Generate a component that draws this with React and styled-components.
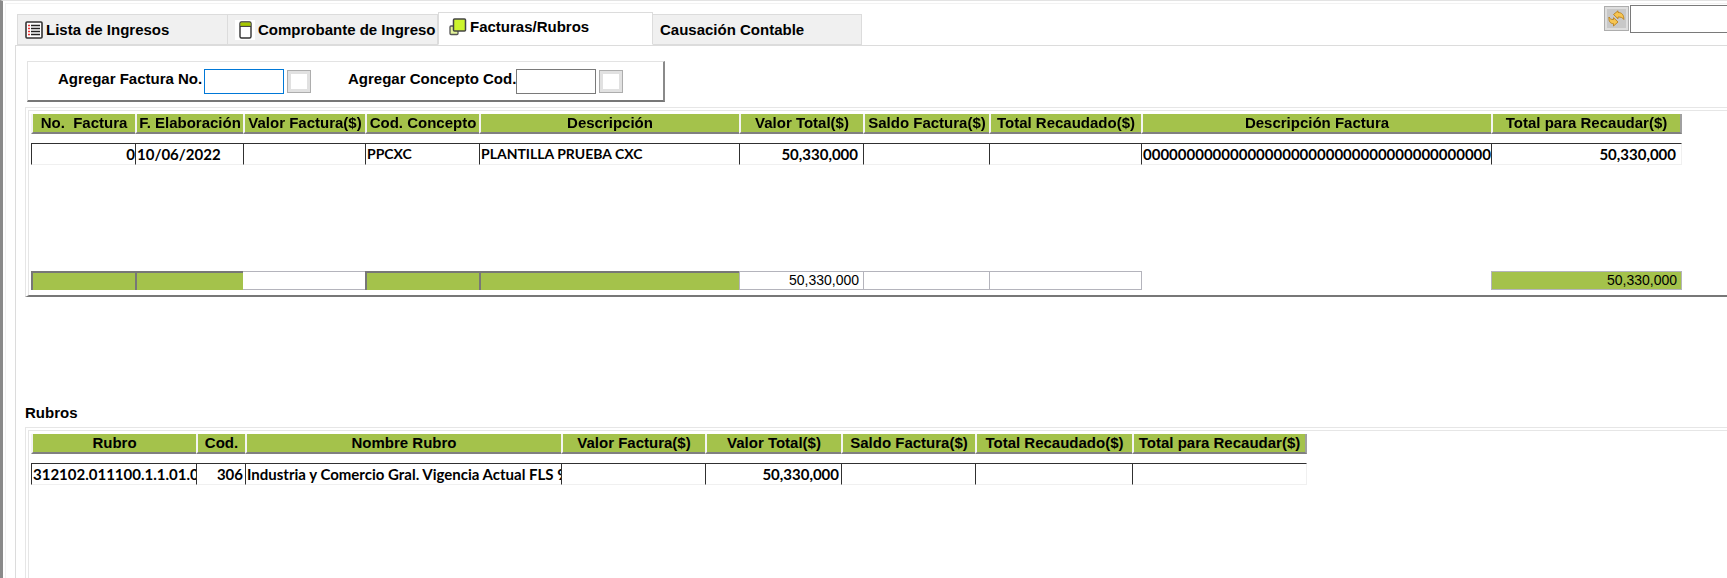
import styled, { createGlobalStyle, css } from 'styled-components';

const green = '#a4c24b';

const GlobalStyle = createGlobalStyle`
	* {
		box-sizing: border-box;
	}
	body {
		margin: 0;
		background: #fff;
		color: #000;
		font-family: 'Liberation Sans', Arial, sans-serif;
		font-size: 15px;
		line-height: 18px;
	}
`;

const Window = styled.div`
	display: flex;
	flex-direction: column;
	min-height: 100vh;
	overflow: hidden;
	border-left: 3px solid #8a8a8a;
	border-top: 1px solid #e3e3e3;
	padding: 2px 0 0 2px;
`;

const Frame = styled.div`
	flex: 1;
	display: flex;
	flex-direction: column;
	border-left: 1px solid #f2f2f2;
	border-top: 1px solid #f2f2f2;
	padding-left: 9px;
`;

const TopBar = styled.header`
	display: flex;
	justify-content: space-between;
	height: 41px;
`;

const Tabs = styled.nav`
	display: flex;
	align-items: flex-end;
	padding-left: 2px;
`;

const Tab = styled.button`
	display: flex;
	align-items: center;
	gap: 3px;
	width: ${({ $width }) => $width}px;
	height: 31px;
	padding: 0 0 0 7px;
	border: 1px solid #dcdcdc;
	border-left-width: ${({ $joined }) => ($joined ? 0 : 1)}px;
	background: #f0f0f0;
	font: inherit;
	font-weight: bold;
	white-space: nowrap;
	color: #000;

	${({ $active }) =>
		$active &&
		css`
			height: 33px;
			padding: 0 0 3px 10px;
			border-bottom-color: #fff;
			border-left-width: 1px;
			background: #fff;
		`}
`;

const Search = styled.div`
	display: flex;
	align-items: flex-start;
	gap: 1px;
	padding-top: 1px;
`;

const SearchInput = styled.input`
	width: 97px;
	height: 28px;
	border: 1px solid #7a7a7a;
	border-right: 0;
	background: #fff;
`;

const RefreshButton = styled.button`
	display: grid;
	place-items: center;
	width: 25px;
	height: 25px;
	margin-top: 1px;
	padding: 0;
	border: 1px solid #adadad;
	background: #c8c8c8;
	box-shadow: inset 0 0 0 2px #dedede;
`;

const Page = styled.main`
	flex: 1;
	border-left: 1px solid #dcdcdc;
	border-top: 1px solid #dcdcdc;
	padding: 15px 0 0 9px;
`;

const AddForm = styled.form`
	display: flex;
	align-items: center;
	width: fit-content;
	height: 41px;
	margin-left: 2px;
	padding: 0 40px 0 30px;
	border: 1px solid #e3e3e3;
	border-right: 2px solid #8a8a8a;
	border-bottom: 2px solid #777;
`;

const Field = styled.div`
	display: flex;
	align-items: center;
	gap: 3px;

	& + & {
		margin-left: 37px;
	}
`;

const Label = styled.label`
	width: ${({ $width }) => $width}px;
	padding-bottom: 4px;
	font-weight: bold;
	white-space: nowrap;
`;

const CodeInput = styled.input`
	width: 80px;
	height: 25px;
	padding: 0 3px;
	border: 1px solid #7a7a7a;
	font: inherit;
	text-align: right;
	outline: none;

	&:focus {
		border-color: #0078d7;
	}
`;

const PickButton = styled.button`
	width: 24px;
	height: 23px;
	padding: 0;
	border: 1px solid #adadad;
	background: #fff;
	box-shadow: inset 0 0 0 3px #e1e1e1;
`;

const GridPanel = styled.section`
	height: ${({ $height }) => $height};
	margin-top: 5px;
	padding: 3px 0 0 2px;
	border-left: 4px double #e6e6e6;
	border-top: 4px double #e6e6e6;
	border-bottom: ${({ $open }) => ($open ? '0' : '2px solid #777')};
`;

const Table = styled.table`
	table-layout: fixed;
	width: ${({ $width }) => $width}px;
	border-collapse: separate;
	border-spacing: 0;
`;

const HeadCell = styled.th`
	height: 20px;
	padding: 0;
	border-left: 2px solid #f4f4f4;
	border-bottom: 2px solid #808080;
	background: ${green};
	background-clip: padding-box;
	line-height: 18px;
	white-space: pre;

	&:last-child {
		border-right: 2px solid #a0a0a0;
	}
`;

const Cell = styled.td`
	height: 22px;
	padding: 0 ${({ $pad }) => $pad || 0}px 0 1px;
	border-left: 1px solid #303030;
	border-top: 1px solid #303030;
	border-bottom: 1px solid #f0f0f0;
	overflow: hidden;
	font-family: Lato, sans-serif;
	font-size: ${({ $caps }) => ($caps ? 14 : 15)}px;
	font-weight: bold;
	line-height: 20px;
	text-align: ${({ $align }) => $align || 'left'};
	white-space: nowrap;

	&:last-child {
		border-right: 1px solid #f0f0f0;
	}
`;

const Spacer = styled.td`
	height: ${({ $height }) => $height}px;
	padding: 0;
`;

const TotalCell = styled.td`
	height: 19px;
	padding: 0 4px 0 0;
	border: 1px solid #b4b4bc;
	border-right-width: 0;
	font-size: 14px;
	line-height: 17px;
	text-align: right;

	${({ $kind }) =>
		$kind === 'sunken' &&
		css`
			border: solid #777;
			border-width: 2px 0 0 2px;
			background: ${green};
		`}
	${({ $kind }) =>
		$kind === 'open' &&
		css`
			border-left: 0;
		`}
	${({ $kind }) =>
		$kind === 'none' &&
		css`
			border-width: 0 0 0 1px;
		`}
	${({ $kind }) =>
		$kind === 'sum' &&
		css`
			border-right-width: 1px;
			background: ${green};
		`}
`;

const SectionTitle = styled.h2`
	margin: 107px 0 5px;
	font-size: 15px;
	line-height: 18px;
`;

const ListIcon = () => (
	<svg width="18" height="18" viewBox="0 0 18 18">
		<rect x="1" y="1" width="16" height="16" rx="1" fill="#fff" stroke="#333" strokeWidth="1.6" />
		<path d="M6 4.5h9M6 7.500h9M6 10.500h9M6 13.500h9" stroke="#222" strokeWidth="1.4" />
		<path d="M3 4.500h2M3 7.500h2M3 10.500h2M3 13.500h2" stroke="#e33" strokeWidth="1.4" />
	</svg>
);

const DocumentIcon = () => (
	<svg width="20" height="20" viewBox="0 0 20 20">
		<path fill="#fff" d="M0 0h20v20H0z" />
		<rect x="5" y="2" width="11" height="16" rx="1.5" fill="#fff" stroke="#333" strokeWidth="1.4" />
		<path d="M5.5 2.5h10V6h-10z" fill="#a6c800" />
		<path d="M5 6.4h11" stroke="#333" />
	</svg>
);

const LayersIcon = () => (
	<svg width="18" height="18" viewBox="0 0 18 18">
		<rect x="1" y="8" width="8" height="8.5" rx="1" fill="#e4f49a" stroke="#555" strokeWidth="1.3" />
		<rect x="4.5" y="1" width="12" height="12" rx="1" fill="#ccf52c" stroke="#444" strokeWidth="1.5" />
	</svg>
);

const RefreshIcon = () => (
	<svg width="17" height="17" viewBox="0 0 17 17">
		<path
			d="M5.500 4.500 10 .8v1.700c4 0 6 2.500 5.800 7C14.500 7.500 13 7 10 7v1.800z"
			fill="#f6c552"
			stroke="#b57a10"
			strokeWidth=".8"
		/>
		<path
			d="M1 7c1 2 2 2.500 4.500 2.500V7.700L10 12l-4.500 4v-2.300C2 13.500.5 11 1 7z"
			fill="#f6c552"
			stroke="#b57a10"
			strokeWidth=".8"
		/>
	</svg>
);

const facturas = [
	{ title: 'No.  Factura', width: 104, value: '0', align: 'right', total: 'sunken' },
	{ title: 'F. Elaboración', width: 108, value: '10/06/2022', total: 'sunken' },
	{ title: 'Valor Factura($)', width: 122, total: 'open' },
	{ title: 'Cod. Concepto', width: 114, value: 'PPCXC', caps: true, total: 'sunken' },
	{ title: 'Descripción', width: 260, value: 'PLANTILLA PRUEBA CXC', caps: true, total: 'sunken' },
	{ title: 'Valor Total($)', width: 124, value: '50,330,000', align: 'right', pad: 5, sum: '50,330,000' },
	{ title: 'Saldo Factura($)', width: 126 },
	{ title: 'Total Recaudado($)', width: 152 },
	{ title: 'Descripción Factura', width: 350, value: '0'.repeat(44), total: 'none' },
	{
		title: 'Total para Recaudar($)',
		width: 191,
		value: '50,330,000',
		align: 'right',
		pad: 5,
		sum: '50,330,000',
		total: 'sum',
	},
];

const rubros = [
	{ title: 'Rubro', width: 165, value: '312102.011100.1.1.01.01' },
	{ title: 'Cod.', width: 49, value: '306', align: 'right', pad: 2 },
	{ title: 'Nombre Rubro', width: 316, value: 'Industria y Comercio Gral. Vigencia Actual FLS 9' },
	{ title: 'Valor Factura($)', width: 144 },
	{ title: 'Valor Total($)', width: 136, value: '50,330,000', align: 'right', pad: 2 },
	{ title: 'Saldo Factura($)', width: 134 },
	{ title: 'Total Recaudado($)', width: 157 },
	{ title: 'Total para Recaudar($)', width: 175 },
];

const Grid = ({ columns, totals, label }) => (
	<Table aria-label={label} $width={columns.reduce((sum, c) => sum + c.width, 0)}>
		<colgroup>
			{columns.map((c) => (
				<col key={c.title} style={{ width: c.width }} />
			))}
		</colgroup>
		<thead>
			<tr>
				{columns.map((c) => (
					<HeadCell key={c.title}>{c.title}</HeadCell>
				))}
			</tr>
		</thead>
		<tbody>
			<tr>
				<Spacer $height={9} colSpan={columns.length} />
			</tr>
			<tr>
				{columns.map((c) => (
					<Cell key={c.title} $align={c.align} $pad={c.pad} $caps={c.caps}>
						{c.value}
					</Cell>
				))}
			</tr>
		</tbody>
		{totals && (
			<tfoot>
				<tr>
					<Spacer $height={106} colSpan={columns.length} />
				</tr>
				<tr>
					{columns.map((c) => (
						<TotalCell key={c.title} $kind={c.total}>
							{c.sum}
						</TotalCell>
					))}
				</tr>
			</tfoot>
		)}
	</Table>
);

const App = () => {
	return (
		<>
			<GlobalStyle />
			<Window>
				<Frame>
					<TopBar>
						<Tabs>
							<Tab $width={211}>
								<ListIcon />
								Lista de Ingresos
							</Tab>
							<Tab $width={210} $joined>
								<DocumentIcon />
								Comprobante de Ingreso
							</Tab>
							<Tab $width={215} $active>
								<LayersIcon />
								Facturas/Rubros
							</Tab>
							<Tab $width={209} $joined>
								Causación Contable
							</Tab>
						</Tabs>
						<Search>
							<RefreshButton aria-label="Actualizar">
								<RefreshIcon />
							</RefreshButton>
							<SearchInput aria-label="Buscar" />
						</Search>
					</TopBar>
					<Page>
						<AddForm>
							<Field>
								<Label htmlFor="factura" $width={143}>
									Agregar Factura No.
								</Label>
								<CodeInput id="factura" autoFocus />
								<PickButton type="button" aria-label="Elegir factura" />
							</Field>
							<Field>
								<Label htmlFor="concepto" $width={165}>
									Agregar Concepto Cod.
								</Label>
								<CodeInput id="concepto" />
								<PickButton type="button" aria-label="Elegir concepto" />
							</Field>
						</AddForm>
						<GridPanel $height="190px">
							<Grid columns={facturas} totals label="Facturas" />
						</GridPanel>
						<SectionTitle>Rubros</SectionTitle>
						<GridPanel $height="151px" $open>
							<Grid columns={rubros} label="Rubros" />
						</GridPanel>
					</Page>
				</Frame>
			</Window>
		</>
	);
};

export default App;
